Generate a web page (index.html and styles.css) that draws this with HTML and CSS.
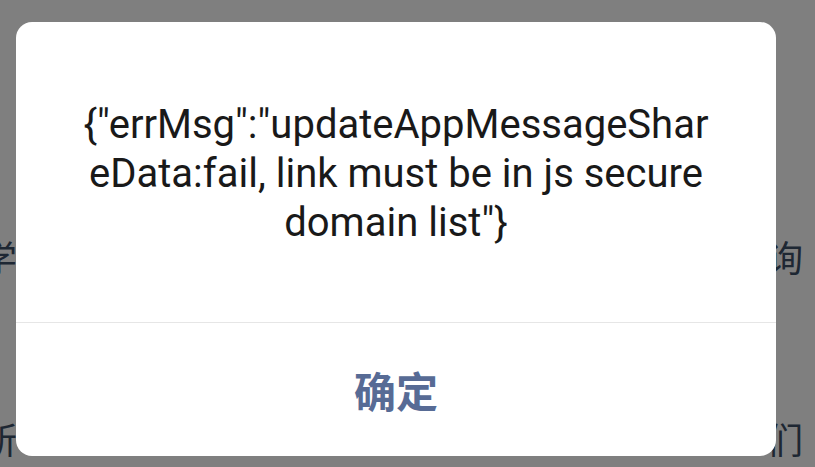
FILE: index.html
```html
<!DOCTYPE html>
<html lang="zh-CN">
<head>
  <meta charset="UTF-8" />
  <meta name="viewport" content="width=device-width, initial-scale=1.0"/>
  <title>提示</title>
  <link rel="stylesheet" href="styles.css">
</head>
<body>

  <div class="page">
    <div class="row row-top">
      <span class="cut-left">学</span>
      <span>询</span>
    </div>
    <div class="row row-bottom">
      <span class="cut-left">所</span>
      <span>们</span>
    </div>
  </div>

  <div class="mask">
    <div class="dialog">
      <div class="dialog-body">{"errMsg":"updateAppMessageShareData:fail, link must be in js secure domain list"}</div>
      <div class="dialog-foot">
        <button class="btn-ok">确定</button>
      </div>
    </div>
  </div>

</body>
</html>
```

FILE: styles.css
```css
html, body {
  margin: 0;
  padding: 0;
}
body {
  width: 815px;
  height: 467px;
  overflow: hidden;
  background-color: #fff;
  font-family: Roboto, "Noto Sans CJK SC", sans-serif;
}
.page {
  padding-top: 232px;
  color: #3c4e66;
  font-size: 36px;
  font-family: "Noto Sans CJK SC", sans-serif;
}
.row {
  display: flex;
  justify-content: space-between;
  padding-right: 12px;
  line-height: 48px;
}
.row-bottom {
  margin-top: 134px;
}
.cut-left {
  margin-left: -19px;
}
.mask {
  position: fixed;
  inset: 0;
  background: rgba(0, 0, 0, 0.5);
}
.dialog {
  position: absolute;
  left: 16px;
  top: 22px;
  width: 760px;
  height: 434px;
  background: #fff;
  border-radius: 16px;
  display: flex;
  flex-direction: column;
}
.dialog-body {
  height: 301px;
  box-sizing: border-box;
  padding: 78px 64px 0;
  text-align: center;
  font-size: 40px;
  line-height: 49px;
  color: #191919;
  overflow-wrap: break-word;
  border-bottom: 1px solid #e6e6e6;
}
.dialog-foot {
  flex: 1;
  display: flex;
  align-items: center;
  justify-content: center;
}
.btn-ok {
  background: none;
  border: none;
  padding: 0;
  font-family: "Noto Sans CJK SC", sans-serif;
  font-size: 42px;
  font-weight: bold;
  color: #576b95;
}
```
